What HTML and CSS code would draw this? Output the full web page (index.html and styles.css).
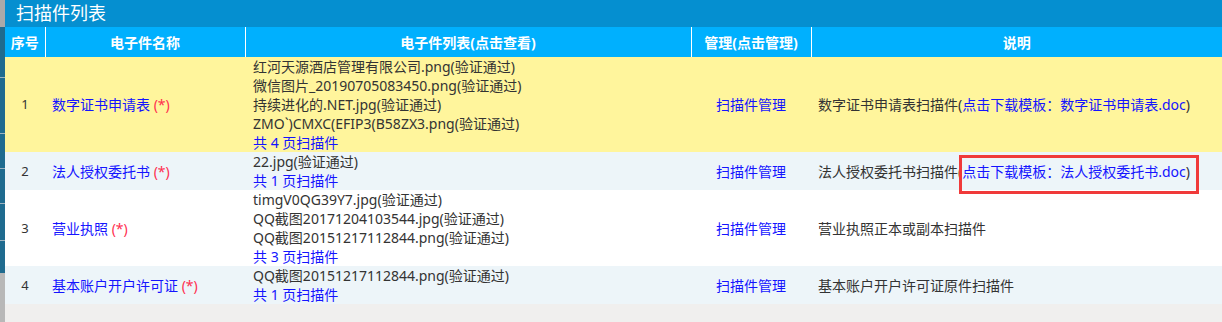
FILE: index.html
```html
<!DOCTYPE html>
<html lang="zh-CN">
<head>
<meta charset="utf-8">
<title>扫描件列表</title>
<link rel="stylesheet" href="styles.css">
</head>
<body>
<div class="page">
  <div class="side-strip"></div>
  <div class="main">
    <div class="title-bar">扫描件列表</div>
    <table class="grid">
      <colgroup>
        <col class="c-no">
        <col class="c-name">
        <col class="c-files">
        <col class="c-manage">
        <col class="c-desc">
      </colgroup>
      <thead>
        <tr>
          <th>序号</th>
          <th>电子件名称</th>
          <th>电子件列表(点击查看)</th>
          <th>管理(点击管理)</th>
          <th>说明</th>
        </tr>
      </thead>
      <tbody>
        <tr class="row-yellow">
          <td class="no">1</td>
          <td class="name"><a class="lnk">数字证书申请表</a> <span class="req">(*)</span></td>
          <td class="files">
            <div>红河天源酒店管理有限公司.png(验证通过)</div>
            <div>微信图片_20190705083450.png(验证通过)</div>
            <div>持续进化的.NET.jpg(验证通过)</div>
            <div>ZMO`)CMXC(EFIP3(B58ZX3.png(验证通过)</div>
            <div><a class="lnk">共 4 页扫描件</a></div>
          </td>
          <td class="manage"><a class="lnk">扫描件管理</a></td>
          <td class="desc">数字证书申请表扫描件(<a class="lnk">点击下载模板：数字证书申请表.doc</a>)</td>
        </tr>
        <tr class="row-blue">
          <td class="no">2</td>
          <td class="name"><a class="lnk">法人授权委托书</a> <span class="req">(*)</span></td>
          <td class="files">
            <div>22.jpg(验证通过)</div>
            <div><a class="lnk">共 1 页扫描件</a></div>
          </td>
          <td class="manage"><a class="lnk">扫描件管理</a></td>
          <td class="desc">法人授权委托书扫描件<span class="marked">(<a class="lnk">点击下载模板：法人授权委托书.doc</a>)</span></td>
        </tr>
        <tr class="row-white">
          <td class="no">3</td>
          <td class="name"><a class="lnk">营业执照</a> <span class="req">(*)</span></td>
          <td class="files">
            <div>timgV0QG39Y7.jpg(验证通过)</div>
            <div>QQ截图20171204103544.jpg(验证通过)</div>
            <div>QQ截图20151217112844.png(验证通过)</div>
            <div><a class="lnk">共 3 页扫描件</a></div>
          </td>
          <td class="manage"><a class="lnk">扫描件管理</a></td>
          <td class="desc">营业执照正本或副本扫描件</td>
        </tr>
        <tr class="row-blue">
          <td class="no">4</td>
          <td class="name"><a class="lnk">基本账户开户许可证</a> <span class="req">(*)</span></td>
          <td class="files">
            <div>QQ截图20151217112844.png(验证通过)</div>
            <div><a class="lnk">共 1 页扫描件</a></div>
          </td>
          <td class="manage"><a class="lnk">扫描件管理</a></td>
          <td class="desc">基本账户开户许可证原件扫描件</td>
        </tr>
      </tbody>
    </table>
  </div>
</div>
</body>
</html>
```
FILE: styles.css
```css
html, body {
  margin: 0;
  padding: 0;
  height: 100%;
}

body {
  font-family: "Noto Sans", "Noto Sans CJK SC", sans-serif;
  font-size: 14px;
  color: #333333;
  background: #f0efee;
}

.page {
  display: flex;
  min-height: 322px;
}

.side-strip {
  width: 5px;
  flex: none;
  background: linear-gradient(to bottom,
    #a9a9a9 0, #a9a9a9 27px,
    #1f6b8f 27px, #1f6b8f 77px,
    #9fb3bf 77px, #9fb3bf 78px,
    #1f6b8f 78px, #1f6b8f 133px,
    #9fb3bf 133px, #9fb3bf 134px,
    #1f6b8f 134px, #1f6b8f 168px,
    #9fb3bf 168px, #9fb3bf 169px,
    #1f6b8f 169px, #1f6b8f 203px,
    #9fb3bf 203px, #9fb3bf 204px,
    #1f6b8f 204px, #1f6b8f 240px,
    #9fb3bf 240px, #9fb3bf 241px,
    #1f6b8f 241px, #1f6b8f 273px,
    #b8b8b8 273px, #b8b8b8 100%);
}

.main {
  flex: 1;
  min-width: 0;
  background: #f0efee;
}

.title-bar {
  height: 27px;
  line-height: 27px;
  background: #058fd0;
  color: #ffffff;
  font-size: 18px;
  padding-left: 11px;
}

.grid {
  width: 100%;
  border-collapse: collapse;
  table-layout: fixed;
}

.c-no { width: 40px; }
.c-name { width: 200px; }
.c-files { width: 446px; }
.c-manage { width: 120px; }

.grid th {
  height: 30px;
  padding: 0;
  background: #00b0fe;
  color: #ffffff;
  font-weight: bold;
  font-size: 14px;
  text-align: center;
  border-left: 1px solid #ffffff;
}

.grid th:first-child {
  border-left: none;
}

.grid td {
  padding: 0 7px;
  line-height: 19px;
  vertical-align: middle;
  font-size: 14px;
}

.row-yellow td { background: #fff59c; }
.row-blue td { background: #edf5f9; }
.row-white td { background: #ffffff; }

.grid td.no {
  text-align: center;
  padding: 0;
  font-size: 13px;
}

.grid td.files {
  padding-left: 8px;
}

.grid td.manage {
  text-align: center;
  padding: 0;
}

.lnk {
  color: #1414ff;
  text-decoration: none;
  cursor: pointer;
}

.req {
  color: #ff2f4f;
}

.marked {
  position: relative;
}

.marked::after {
  content: "";
  position: absolute;
  left: 1px;
  right: -9px;
  top: -7px;
  bottom: -13px;
  border: 3px solid #f03a3a;
  pointer-events: none;
}
```
